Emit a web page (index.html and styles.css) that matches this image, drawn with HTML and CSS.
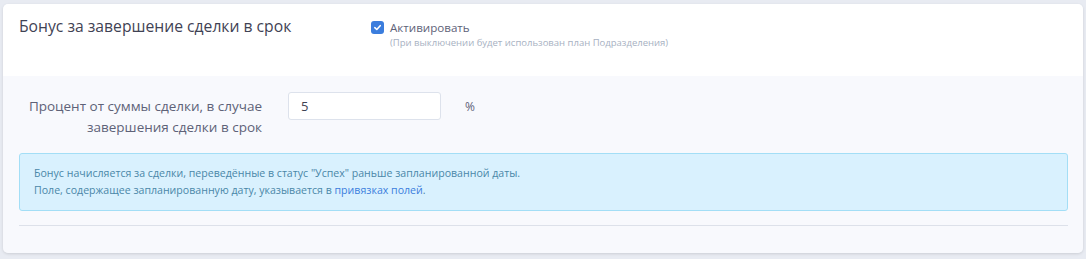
FILE: index.html
```html
<!DOCTYPE html>
<html lang="ru">

<head>
    <meta charset="UTF-8">
    <meta name="viewport" content="width=device-width, initial-scale=1.0">
    <title>Бонус</title>
    <link rel="stylesheet" href="styles.css">
</head>

<body>
    <div class="card">
        <div class="card__head">
            <div class="card__title">Бонус за завершение сделки в срок</div>
            <div class="toggle">
                <label class="toggle__row">
                    <span class="toggle__box">
                        <svg width="9" height="9" viewBox="0 0 10 10">
                            <path d="M2 5.2 L4.2 7.2 L8 3" fill="none" stroke="#fff" stroke-width="1.8" stroke-linecap="round" stroke-linejoin="round" />
                        </svg>
                    </span>
                    <span class="toggle__label">Активировать</span>
                </label>
                <div class="toggle__hint">(При выключении будет использован план Подразделения)</div>
            </div>
        </div>
        <div class="card__body">
            <div class="field">
                <div class="field__label">Процент от суммы сделки, в случае завершения сделки в срок</div>
                <div class="field__input">5</div>
                <div class="field__unit">%</div>
            </div>
            <div class="alert">
                Бонус начисляется за сделки, переведённые в статус "Успех" раньше запланированной даты.<br>
                Поле, содержащее запланированную дату, указывается в <a class="alert__link" href="#">привязках полей</a>.
            </div>
            <div class="divider"></div>
        </div>
    </div>
</body>

</html>
```

FILE: styles.css
```css
* {
    box-sizing: border-box;
}

body {
    margin: 0;
    padding: 4px 3px 5px 3px;
    font-family: 'Open Sans', sans-serif;
    background-color: #e8ebf2;
}

.card {
    border-radius: 5px;
    overflow: hidden;
    box-shadow: 0 1px 3px rgb(0 0 0 / 12%);
}

.card__head {
    display: flex;
    align-items: flex-start;
    height: 72px;
    padding: 11px 16px;
    background-color: #fff;
}

.card__title {
    width: 352px;
    font-size: 15.7px;
    color: #3f4254;
}

.toggle {
    padding-top: 5px;
}

.toggle__row {
    display: flex;
    align-items: center;
    gap: 6px;
}

.toggle__box {
    width: 13px;
    height: 13px;
    border-radius: 3px;
    background-color: #3b7ddd;
    display: flex;
    align-items: center;
    justify-content: center;
}

.toggle__label {
    font-size: 11.6px;
    color: #5e6278;
}

.toggle__hint {
    margin: 1px 0 0 19px;
    font-size: 9.5px;
    color: #a7b1c2;
}

.card__body {
    background-color: #f8f9fd;
    padding: 16px 15px 27px 16px;
}

.field {
    display: flex;
    align-items: flex-start;
}

.field__label {
    width: 243px;
    padding-top: 4px;
    text-align: right;
    font-size: 13.5px;
    line-height: 21px;
    color: #5e6278;
}

.field__input {
    width: 153px;
    height: 28px;
    margin-left: 26px;
    padding: 4px 12px;
    background-color: #fff;
    border: 1px solid #dde2ec;
    border-radius: 3px;
    font-size: 13px;
    color: #3f4254;
}

.field__unit {
    margin-left: 24px;
    padding-top: 6px;
    font-size: 12px;
    color: #5e6278;
}

.alert {
    margin-top: 15px;
    padding: 11px 14px;
    background-color: #d9f1fe;
    border: 1px solid #a3def6;
    border-radius: 3px;
    font-size: 10.6px;
    line-height: 17px;
    color: #4a87a8;
}

.alert__link {
    color: #3b7ddd;
    text-decoration: none;
}

.divider {
    margin-top: 14px;
    height: 1px;
    background-color: #dde1ea;
}
```
